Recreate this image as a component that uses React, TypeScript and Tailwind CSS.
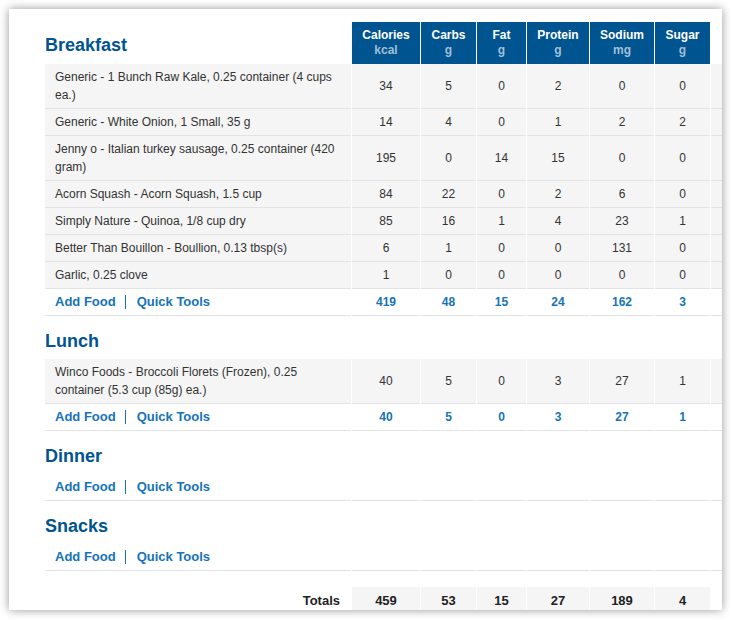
import React from "react";

type Food = { name: string; v: (number | string)[] };

const GRID =
  "grid grid-cols-[306px_68px_55px_49px_62px_64px_55px_40px] gap-x-px w-max";

const headers: [string, string][] = [
  ["Calories", "kcal"],
  ["Carbs", "g"],
  ["Fat", "g"],
  ["Protein", "g"],
  ["Sodium", "mg"],
  ["Sugar", "g"],
];

const breakfast: Food[] = [
  { name: "Generic - 1 Bunch Raw Kale, 0.25 container (4 cups ea.)", v: [34, 5, 0, 2, 0, 0] },
  { name: "Generic - White Onion, 1 Small, 35 g", v: [14, 4, 0, 1, 2, 2] },
  { name: "Jenny o - Italian turkey sausage, 0.25 container (420 gram)", v: [195, 0, 14, 15, 0, 0] },
  { name: "Acorn Squash - Acorn Squash, 1.5 cup", v: [84, 22, 0, 2, 6, 0] },
  { name: "Simply Nature - Quinoa, 1/8 cup dry", v: [85, 16, 1, 4, 23, 1] },
  { name: "Better Than Bouillon - Boullion, 0.13 tbsp(s)", v: [6, 1, 0, 0, 131, 0] },
  { name: "Garlic, 0.25 clove", v: [1, 0, 0, 0, 0, 0] },
];

const lunch: Food[] = [
  { name: "Winco Foods - Broccoli Florets (Frozen), 0.25 container (5.3 cup (85g) ea.)", v: [40, 5, 0, 3, 27, 1] },
];

function FoodRow({ f }: { f: Food }) {
  return (
    <>
      <div className="bg-[#f5f5f5] border-b border-[#e3e3e3] py-1 pl-[10px] pr-[10px] text-[12px] leading-[18px] text-[#333]">
        {f.name}
      </div>
      {f.v.map((n, i) => (
        <div
          key={i}
          className="bg-[#f5f5f5] border-b border-[#e3e3e3] flex items-center justify-center text-[12px] leading-[18px] text-[#333]"
        >
          {n}
        </div>
      ))}
      <div className="bg-[#f5f5f5] border-b border-[#e3e3e3]" />
    </>
  );
}

function AddRow({ totals }: { totals?: number[] }) {
  const cells = totals ?? [null, null, null, null, null, null];
  return (
    <>
      <div className="h-[27px] border-b border-[#e3e3e3] flex items-center pl-[10px] text-[13px] font-bold text-[#1673b8]">
        <span className="pr-[9px]">Add Food</span>
        <span className="w-px h-[14px] bg-[#1673b8]" />
        <span className="pl-[11px]">Quick Tools</span>
      </div>
      {cells.map((n, i) => (
        <div
          key={i}
          className="h-[27px] border-b border-[#e3e3e3] flex items-center justify-center text-[12px] font-bold text-[#1673b8]"
        >
          {n}
        </div>
      ))}
      <div className="h-[27px] border-b border-[#e3e3e3]" />
    </>
  );
}

function Title({ text }: { text: string }) {
  return (
    <div className="col-span-8 h-[43px] flex items-end pb-[7px] text-[18px] leading-[22px] font-bold text-[#00548f]">
      {text}
    </div>
  );
}

export default function App() {
  return (
    <div className="w-[730px] h-[619px] bg-white pt-[9px] pl-[9px] font-['Liberation_Sans',Arial,sans-serif]">
      <div className="w-[713px] h-[601px] bg-white overflow-hidden shadow-[0_0_9px_rgba(0,0,0,0.42)] pl-[36px] pt-[13px]">
        <div className={GRID}>
          {/* Header row */}
          <div className="h-[42px] flex items-end pb-2 text-[18px] leading-[22px] font-bold text-[#00548f]">
            Breakfast
          </div>
          {headers.map(([a, b]) => (
            <div
              key={a}
              className="h-[42px] bg-[#00548f] flex flex-col items-center justify-center text-[12px] leading-[15px] font-bold"
            >
              <span className="text-white">{a}</span>
              <span className="text-[#a0bfd8]">{b}</span>
            </div>
          ))}
          <div />

          {breakfast.map((f) => (
            <FoodRow key={f.name} f={f} />
          ))}
          <AddRow totals={[419, 48, 15, 24, 162, 3]} />

          <Title text="Lunch" />
          {lunch.map((f) => (
            <FoodRow key={f.name} f={f} />
          ))}
          <AddRow totals={[40, 5, 0, 3, 27, 1]} />

          <Title text="Dinner" />
          <AddRow />

          <Title text="Snacks" />
          <AddRow />

          <div className="col-span-8 h-[16px]" />

          <div className="h-[27px] flex items-center justify-end pr-[11px] text-[13px] font-bold text-[#222]">
            Totals
          </div>
          {[459, 53, 15, 27, 189, 4].map((n, i) => (
            <div
              key={i}
              className="h-[27px] bg-[#f5f5f5] flex items-center justify-center text-[13px] font-bold text-[#222]"
            >
              {n}
            </div>
          ))}
          <div className="h-[27px]" />
        </div>
      </div>
    </div>
  );
}
